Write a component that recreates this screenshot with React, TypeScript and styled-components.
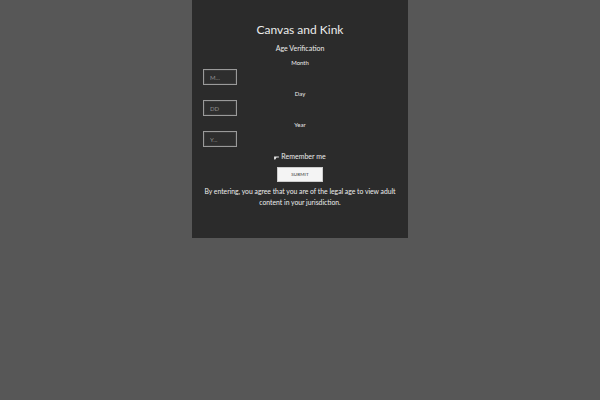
import React from 'react';
import styled, {createGlobalStyle} from 'styled-components';

const GlobalStyle = createGlobalStyle`
  html, body {
    margin: 0;
    padding: 0;
    height: 100%;
    background: #575757;
  }
  body {
    font-family: Lato, "Liberation Sans", sans-serif;
  }
`;

const fields = [
  {label: 'Month', placeholder: 'M...'},
  {label: 'Day', placeholder: 'DD'},
  {label: 'Year', placeholder: 'Y...'},
];

export default function App() {
  return (
    <>
      <GlobalStyle />
      <Styled.Page>
        <Styled.Panel>
          <Styled.Title>Canvas and Kink</Styled.Title>
          <Styled.Subtitle>Age Verification</Styled.Subtitle>
          {fields.map(field => (
            <Styled.Field key={field.label}>
              <Styled.Label>{field.label}</Styled.Label>
              <Styled.Input placeholder={field.placeholder} />
            </Styled.Field>
          ))}
          <Styled.Remember>
            <Styled.Check viewBox="0 0 6 5">
              <path d="M0 0.5 H6 V2 L3 2 L1.5 4.5 H0 Z" fill="#e8e8e8" />
            </Styled.Check>
            Remember me
          </Styled.Remember>
          <Styled.Submit>SUBMIT</Styled.Submit>
          <Styled.Note>
            By entering, you agree that you are of the legal age to view adult
            content in your jurisdiction.
          </Styled.Note>
        </Styled.Panel>
      </Styled.Page>
    </>
  );
}

const Styled = {
  Page: styled.div`
    display: flex;
    justify-content: center;
    width: 600px;
    height: 400px;
  `,
  Panel: styled.div`
    display: flex;
    flex-direction: column;
    align-items: center;
    width: 216px;
    height: 238px;
    box-sizing: border-box;
    padding: 22px 11px 0;
    background: #2b2b2b;
    color: #ececec;
  `,
  Title: styled.h1`
    margin: 0;
    font-size: 12px;
    font-weight: 400;
    line-height: 16px;
  `,
  Subtitle: styled.div`
    margin: 6px 0 1px;
    font-size: 7px;
    line-height: 9px;
  `,
  Field: styled.div`
    display: flex;
    flex-direction: column;
    align-items: center;
    align-self: stretch;
    margin-top: 5px;
  `,
  Label: styled.div`
    font-size: 6px;
    line-height: 8px;
  `,
  Input: styled.input`
    align-self: flex-start;
    width: 34px;
    height: 16px;
    box-sizing: border-box;
    margin-top: 2px;
    padding: 0 6px;
    border: 1px solid #9a9a9a;
    box-shadow: inset 0 0 0 1px #3a3a3a;
    background: #2e2e2e;
    color: #ddd;
    font-family: inherit;
    font-size: 6px;
    outline: none;
    &::placeholder {
      color: #8f8f8f;
    }
  `,
  Remember: styled.label`
    display: flex;
    align-items: center;
    gap: 2px;
    margin-top: 5px;
    font-size: 7px;
    line-height: 9px;
  `,
  Check: styled.svg`
    width: 5px;
    height: 4px;
    margin-top: 2px;
  `,
  Submit: styled.button`
    width: 46px;
    height: 15px;
    margin-top: 6px;
    padding: 0;
    border: 1px solid #ccc;
    background: #f4f4f4;
    color: #333;
    font-family: inherit;
    font-size: 4.5px;
    letter-spacing: 0.1px;
  `,
  Note: styled.p`
    margin: 4px 0 0;
    font-size: 6.8px;
    line-height: 11px;
    text-align: center;
  `,
};
